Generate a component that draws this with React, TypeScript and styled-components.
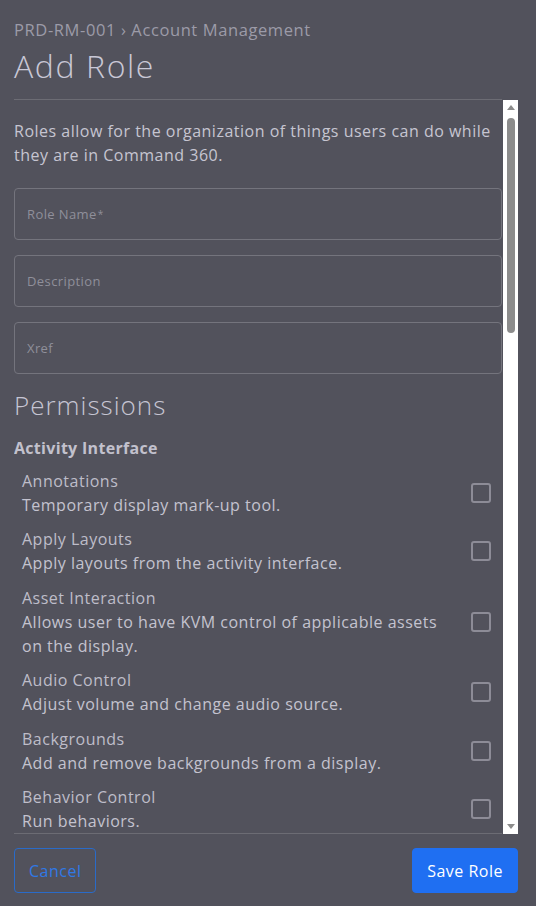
import React from "react";
import styled, { createGlobalStyle } from "styled-components";

const GlobalStyle = createGlobalStyle`
    html, body {
        margin: 0;
        padding: 0;
        background: #52525c;
    }
    body {
        font-family: "Open Sans", "Liberation Sans", sans-serif;
        color: #c4c3cf;
        letter-spacing: 0.5px;
    }
    * {
        box-sizing: border-box;
    }
`;

const Page = styled.div`
    width: 536px;
    height: 906px;
    padding: 18px 18px 0 14px;
    display: flex;
    flex-direction: column;
    background: #52525c;
`;

const Breadcrumb = styled.div`
    font-size: 16.5px;
    line-height: 24px;
    letter-spacing: 0.6px;
    color: #9c9ba8;
`;

const Title = styled.h1`
    margin: 4px 0 13px;
    font-size: 32px;
    line-height: 40px;
    font-weight: 300;
    letter-spacing: 1.6px;
    color: #c9c8d6;
`;

const ScrollRegion = styled.div`
    display: flex;
    gap: 1px;
    height: 735px;
`;

const ScrollBody = styled.div`
    flex: 1;
    overflow-y: auto;
    border-top: 1px solid #6c6c74;
    border-bottom: 1px solid #6c6c74;
    padding: 19px 0 0;
    scrollbar-width: none;

    &::-webkit-scrollbar {
        display: none;
    }
`;

const Intro = styled.p`
    margin: 0 0 21px;
    font-size: 16px;
    line-height: 24px;
    color: #c6c5d1;
`;

const FieldBox = styled.div`
    height: 52px;
    border: 1px solid #74747d;
    border-radius: 4px;
    display: flex;
    align-items: center;
    padding: 0 12px;
    margin-bottom: 15px;
    font-size: 13px;
    letter-spacing: 0.4px;
    color: #8f8f9a;
`;

const Required = styled.sup`
    font-size: 10px;
    margin-left: 1px;
`;

const SectionTitle = styled.h2`
    margin: 0 0 15px;
    font-size: 26px;
    line-height: 32px;
    font-weight: 300;
    letter-spacing: 1px;
    color: #c6c5d3;
`;

const GroupTitle = styled.h3`
    margin: 0 0 9px;
    font-size: 16px;
    line-height: 24px;
    font-weight: 700;
    letter-spacing: 0.3px;
    color: #c2c1cd;
`;

const PermissionList = styled.div`
    display: flex;
    flex-direction: column;
    gap: 10.4px;
    padding: 0 11px 0 8px;
`;

const PermissionRow = styled.label`
    display: flex;
    align-items: center;
    justify-content: space-between;
    gap: 16px;
`;

const PermissionText = styled.div`
    display: flex;
    flex-direction: column;
    font-size: 16px;
    line-height: 24px;
    max-width: 440px;
`;

const PermissionName = styled.span`
    color: #bebdc9;
`;

const PermissionDesc = styled.span`
    color: #c4c3cf;
`;

const CheckBox = styled.span`
    flex: none;
    width: 20px;
    height: 20px;
    border: 2px solid #8d8c97;
    border-radius: 3px;
`;

const ScrollTrack = styled.div`
    width: 15px;
    background: #ffffff;
    display: flex;
    flex-direction: column;
    align-items: center;
    margin-top: 1px;
`;

const ArrowButton = styled.div`
    height: 15px;
    display: flex;
    align-items: center;
    justify-content: center;
`;

const Thumb = styled.div`
    width: 8px;
    border-radius: 4px;
    background: #8c8c8c;
    margin-top: 3px;
`;

const TrackRest = styled.div`
    flex: 1;
`;

const Footer = styled.div`
    display: flex;
    justify-content: space-between;
    padding-top: 14px;
`;

const Button = styled.button<{ $primary?: boolean }>`
    height: 45px;
    padding: 0 14px;
    font-family: inherit;
    font-size: 16px;
    line-height: 20px;
    letter-spacing: 0.5px;
    border-radius: 4px;
    cursor: pointer;
    border: 1px solid ${(p) => (p.$primary ? "#1f6ff2" : "#2a6bc8")};
    background: ${(p) => (p.$primary ? "#1f6ff2" : "transparent")};
    color: ${(p) => (p.$primary ? "#ffffff" : "#2f79e6")};
    font-weight: ${(p) => (p.$primary ? 500 : 400)};
`;

const permissions = [
    { name: "Annotations", desc: "Temporary display mark-up tool." },
    { name: "Apply Layouts", desc: "Apply layouts from the activity interface." },
    {
        name: "Asset Interaction",
        desc: "Allows user to have KVM control of applicable assets on the display.",
    },
    { name: "Audio Control", desc: "Adjust volume and change audio source." },
    { name: "Backgrounds", desc: "Add and remove backgrounds from a display." },
    { name: "Behavior Control", desc: "Run behaviors." },
];

const Arrow = ({ up }: { up?: boolean }) => (
    <svg width="8" height="5" viewBox="0 0 8 5">
        <path d={up ? "M0 5 L4 0 L8 5 Z" : "M0 0 L8 0 L4 5 Z"} fill="#8c8c8c" />
    </svg>
);

export default function App() {
    return (
        <>
            <GlobalStyle />
            <Page>
                <Breadcrumb>PRD-RM-001 › Account Management</Breadcrumb>
                <Title>Add Role</Title>
                <ScrollRegion>
                    <ScrollBody>
                        <Intro>
                            Roles allow for the organization of things users can do
                            while they are in Command 360.
                        </Intro>
                        <FieldBox>
                            Role Name<Required>*</Required>
                        </FieldBox>
                        <FieldBox>Description</FieldBox>
                        <FieldBox>Xref</FieldBox>
                        <SectionTitle>Permissions</SectionTitle>
                        <GroupTitle>Activity Interface</GroupTitle>
                        <PermissionList>
                            {permissions.map((p) => (
                                <PermissionRow key={p.name}>
                                    <PermissionText>
                                        <PermissionName>{p.name}</PermissionName>
                                        <PermissionDesc>{p.desc}</PermissionDesc>
                                    </PermissionText>
                                    <CheckBox />
                                </PermissionRow>
                            ))}
                        </PermissionList>
                    </ScrollBody>
                    <ScrollTrack>
                        <ArrowButton>
                            <Arrow up />
                        </ArrowButton>
                        <Thumb style={{ height: 215 }} />
                        <TrackRest />
                        <ArrowButton>
                            <Arrow />
                        </ArrowButton>
                    </ScrollTrack>
                </ScrollRegion>
                <Footer>
                    <Button>Cancel</Button>
                    <Button $primary>Save Role</Button>
                </Footer>
            </Page>
        </>
    );
}
